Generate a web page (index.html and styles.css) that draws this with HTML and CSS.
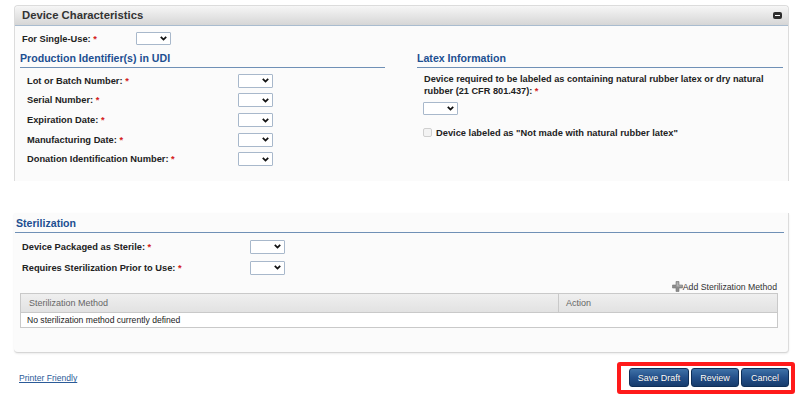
FILE: index.html
```html
<!DOCTYPE html>
<html>
<head>
<meta charset="utf-8">
<link rel="stylesheet" href="styles.css">
</head>
<body>
<div class="page">
  <section class="panel panel-top">
    <div class="panel-head">
      <h2 class="panel-title">Device Characteristics</h2>
      <span class="collapse"><span class="collapse-bar"></span></span>
    </div>
    <div class="panel-body">
      <div class="row row-single">
        <span class="label label-single">For Single-Use: <span class="req">*</span></span>
        <span class="sel sel-sm"><svg class="chev" width="7" height="5" viewBox="0 0 7 5"><path d="M0.8 0.9 L3.5 3.6 L6.2 0.9" fill="none" stroke="#111" stroke-width="1.8"/></svg></span>
      </div>
      <div class="cols">
        <div class="col">
          <h3 class="sec">Production Identifier(s) in UDI</h3>
          <div class="fields">
            <div class="row"><span class="label label-udi">Lot or Batch Number: <span class="req">*</span></span><span class="sel"><svg class="chev" width="7" height="5" viewBox="0 0 7 5"><path d="M0.8 0.9 L3.5 3.6 L6.2 0.9" fill="none" stroke="#111" stroke-width="1.8"/></svg></span></div>
            <div class="row"><span class="label label-udi">Serial Number: <span class="req">*</span></span><span class="sel"><svg class="chev" width="7" height="5" viewBox="0 0 7 5"><path d="M0.8 0.9 L3.5 3.6 L6.2 0.9" fill="none" stroke="#111" stroke-width="1.8"/></svg></span></div>
            <div class="row"><span class="label label-udi">Expiration Date: <span class="req">*</span></span><span class="sel"><svg class="chev" width="7" height="5" viewBox="0 0 7 5"><path d="M0.8 0.9 L3.5 3.6 L6.2 0.9" fill="none" stroke="#111" stroke-width="1.8"/></svg></span></div>
            <div class="row"><span class="label label-udi">Manufacturing Date: <span class="req">*</span></span><span class="sel"><svg class="chev" width="7" height="5" viewBox="0 0 7 5"><path d="M0.8 0.9 L3.5 3.6 L6.2 0.9" fill="none" stroke="#111" stroke-width="1.8"/></svg></span></div>
            <div class="row"><span class="label label-udi">Donation Identification Number: <span class="req">*</span></span><span class="sel"><svg class="chev" width="7" height="5" viewBox="0 0 7 5"><path d="M0.8 0.9 L3.5 3.6 L6.2 0.9" fill="none" stroke="#111" stroke-width="1.8"/></svg></span></div>
          </div>
        </div>
        <div class="col">
          <h3 class="sec">Latex Information</h3>
          <div class="latex">
            <p class="latex-q">Device required to be labeled as containing natural rubber latex or dry natural rubber (21 CFR 801.437):</p>
            <span class="sel sel-sm"><svg class="chev" width="7" height="5" viewBox="0 0 7 5"><path d="M0.8 0.9 L3.5 3.6 L6.2 0.9" fill="none" stroke="#111" stroke-width="1.8"/></svg></span>
            <div class="check-row"><span class="checkbox"></span><span class="check-label">Device labeled as "Not made with natural rubber latex"</span></div>
          </div>
        </div>
      </div>
    </div>
  </section>

  <section class="panel panel-bottom">
    <h3 class="sec sec-wide">Sterilization</h3>
    <div class="fields fields-ster">
      <div class="row"><span class="label label-ster">Device Packaged as Sterile: <span class="req">*</span></span><span class="sel"><svg class="chev" width="7" height="5" viewBox="0 0 7 5"><path d="M0.8 0.9 L3.5 3.6 L6.2 0.9" fill="none" stroke="#111" stroke-width="1.8"/></svg></span></div>
      <div class="row"><span class="label label-ster">Requires Sterilization Prior to Use: <span class="req">*</span></span><span class="sel"><svg class="chev" width="7" height="5" viewBox="0 0 7 5"><path d="M0.8 0.9 L3.5 3.6 L6.2 0.9" fill="none" stroke="#111" stroke-width="1.8"/></svg></span></div>
    </div>
    <div class="add-row">
      <span class="add-link"><svg class="plus" width="11" height="11" viewBox="0 0 11 11"><path d="M4 0.5 H7 V4 H10.5 V7 H7 V10.5 H4 V7 H0.5 V4 H4 Z" fill="#8c8c8c" stroke="#777" stroke-width="0.6"/><path d="M4.6 1.2 H6.4 V4.6 H9.8 V5.4 H4.6 Z" fill="#b5b5b5"/></svg>Add Sterilization Method</span>
    </div>
    <div class="table">
      <div class="thead">
        <span class="th th-method">Sterilization Method</span>
        <span class="th th-action">Action</span>
      </div>
      <div class="tbody">No sterilization method currently defined</div>
    </div>
  </section>

  <footer class="footer">
    <a class="printer" href="#">Printer Friendly</a>
    <div class="btn-wrap">
      <button class="btn btn-save">Save Draft</button>
      <button class="btn btn-review">Review</button>
      <button class="btn btn-cancel">Cancel</button>
    </div>
  </footer>
</div>
</body>
</html>
```

FILE: styles.css
```css
* { box-sizing: border-box; }
html, body { margin: 0; padding: 0; background: #ffffff; }
body { font-family: "Liberation Sans", Arial, sans-serif; color: #222; }

.page { padding: 5px 16px 0 14px; width: 805px; }

.panel { background: #fbfbfb; }
.panel-top {
  border: 1px solid #dcdcdc;
  border-bottom: none;
  border-radius: 4px 4px 0 0;
}
.panel-head {
  height: 20px;
  display: flex;
  align-items: center;
  justify-content: space-between;
  padding: 0 6px 0 7px;
  background: linear-gradient(#f6f6f6, #d6d6d6);
  border-bottom: 1px solid #a9bccf;
  border-radius: 4px 4px 0 0;
}
.panel-title {
  margin: 0;
  font-size: 11.3px;
  font-weight: bold;
  color: #333;
  line-height: 19px;
}
.collapse {
  width: 9px; height: 7px;
  background: #2e2e2e;
  border-radius: 2px;
  display: flex; align-items: center; justify-content: center;
}
.collapse-bar { width: 5px; height: 1.5px; background: #fff; }

.panel-body { padding: 6px 4px 15px 5px; }

.row { display: flex; align-items: center; height: 14px; }
.label { font-size: 9.3px; font-weight: bold; color: #222; white-space: nowrap; }
.req { color: #d42020; }
.row-single { margin-left: 2px; height: 13px; }
.label-single { width: 114px; }

.sel {
  display: inline-flex;
  align-items: center;
  width: 35px; height: 14px;
  border: 1px solid #a8b8cb;
  background: #fff;
  border-radius: 1px;
  padding-left: 23px;
}
.sel-sm { height: 13px; }
.chev { display: block; }

.cols { display: grid; grid-template-columns: 365px 366px; column-gap: 32px; margin-top: 7px; }
.sec {
  margin: 0;
  font-size: 10.6px;
  font-weight: bold;
  color: #1d4f91;
  line-height: 13px;
  padding-bottom: 2px;
  border-bottom: 1.5px solid #6f90b6;
}
.fields { display: flex; flex-direction: column; row-gap: 5.67px; padding-left: 7px; margin-top: 5.8px; }
.label-udi { width: 211px; }

.latex { padding-left: 6px; margin-top: 4.5px; }
.latex-q { margin: 0 0 0 1px; font-size: 9.2px; font-weight: bold; line-height: 12px; color: #222; padding-right: 0; }
.latex-q::after { content: "\00a0*"; color: #d42020; }
.latex .sel { margin-top: 0; }
.check-row { display: flex; align-items: center; margin-top: 13px; height: 10px; }
.checkbox {
  width: 9px; height: 9px;
  border: 1px solid #cfcfcf;
  background: #f3f3f3;
  border-radius: 2px;
  margin-right: 4px;
}
.check-label { font-size: 9.3px; font-weight: bold; color: #222; }

.panel-bottom {
  margin-top: 32px;
  padding: 3.5px 4px 24px 1px;
  border-right: 1px solid #dcdcdc;
  border-bottom: 1px solid #d6d6d6;
  border-radius: 0 0 4px 4px;
  box-shadow: 0 1px 2px rgba(0,0,0,0.08);
}
.sec-wide { padding-left: 1px; }
.fields-ster { padding-left: 7px; margin-top: 7px; row-gap: 7px; }
.label-ster { width: 228px; }

.add-row { display: flex; justify-content: flex-end; margin-top: 7px; padding-right: 7px; height: 10px; align-items: center; }
.add-link { display: inline-flex; align-items: center; font-size: 8.7px; color: #333; }
.plus { margin-right: 0; }

.table {
  margin: 1.5px 6px 0 5px;
  border: 1px solid #c9c9c9;
  background: #fff;
}
.thead {
  display: grid;
  grid-template-columns: 538px 1fr;
  height: 19px;
  background: linear-gradient(#efefef, #e2e2e2);
  border-bottom: 1px solid #c9c9c9;
}
.th { font-size: 9px; color: #666; display: flex; align-items: center; }
.th-method { padding-left: 8px; border-right: 1px solid #c9c9c9; }
.th-action { padding-left: 7px; }
.tbody { height: 14px; font-size: 8.6px; color: #222; padding-left: 6px; display: flex; align-items: center; }

.footer {
  display: flex;
  justify-content: space-between;
  align-items: center;
  margin-top: 9px;
  margin-right: -6px;
  padding-left: 5px;
}
.printer { font-size: 8.6px; color: #2b5b98; text-decoration: underline; }
.btn-wrap {
  display: flex;
  gap: 2px;
  border: 4px solid #ff1a1a;
  border-radius: 3px;
  padding: 2px 2px 3px 8px;
}
.btn {
  height: 19px;
  font-family: "Liberation Sans", Arial, sans-serif;
  font-size: 9px;
  color: #fff;
  background: linear-gradient(#3f72a8, #24508a 50%, #173c6c);
  border: 1px solid #0f2f58;
  border-radius: 3px;
  padding: 0;
  text-shadow: 0 0 1px rgba(0,0,0,0.4);
}
.btn-save { width: 60px; }
.btn-review { width: 48px; }
.btn-cancel { width: 48px; }
```
